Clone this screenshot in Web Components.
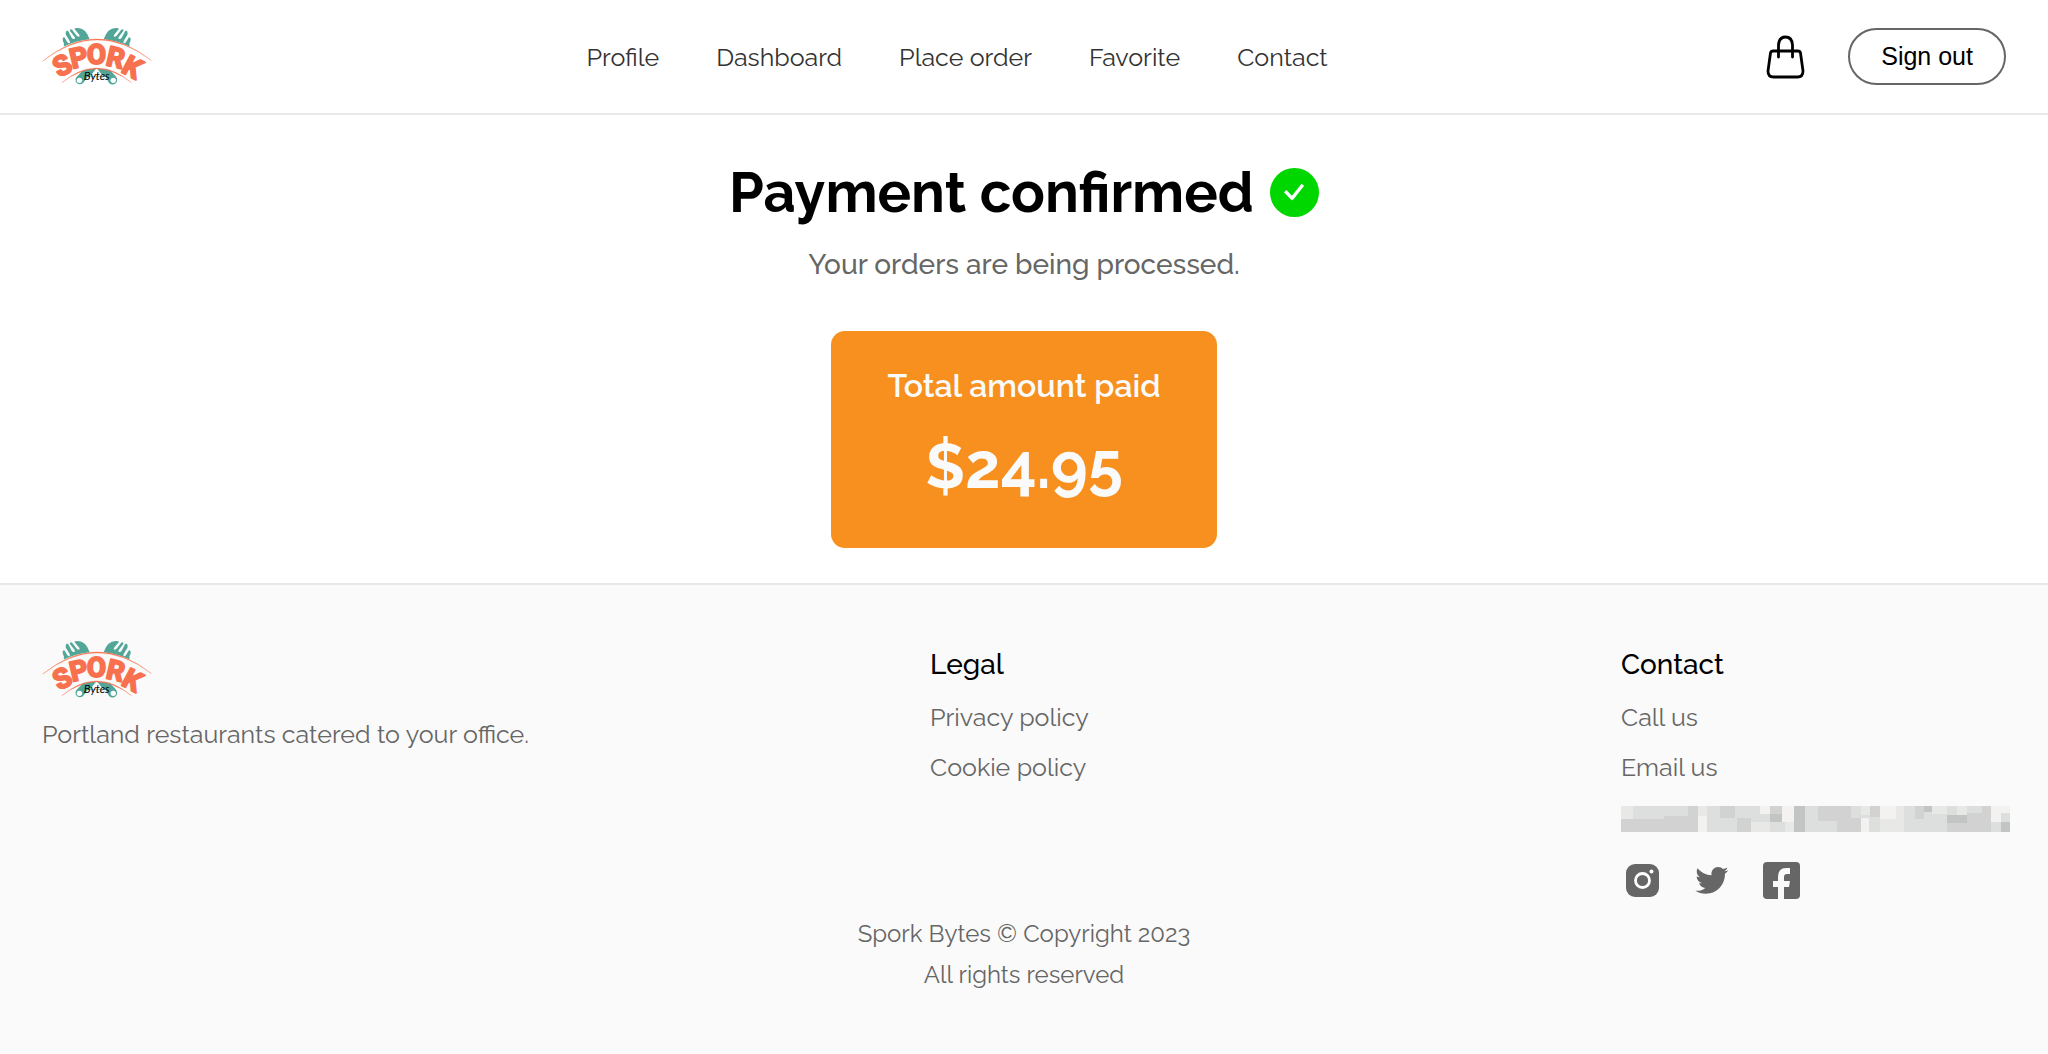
<!DOCTYPE html>
<html lang="en">
<head>
<meta charset="utf-8">
<meta name="viewport" content="width=device-width, initial-scale=1">
<title>Spork Bytes</title>
<style>
    body {
        margin: 0;
        min-height: 100vh;
        display: flex;
        flex-direction: column;
        background: #FFF;
        color: #000;
        font-family: Raleway, Lato, sans-serif;
        font-size: 25px;
        line-height: 32px;
    }
</style>
</head>
<body>
    <header-component></header-component>
    <payment-component amount="$24.95">
        Payment confirmed
        <span slot="message">Your orders are being processed.</span>
    </payment-component>
    <footer-component></footer-component>

<script>
class LogoComponent extends HTMLElement{
    constructor(){
        super();
        this.shadow = this.attachShadow({mode: "open"});
    }

    connectedCallback(){
        this.render();
    }

    render(){
        this.shadow.innerHTML = `
            <style>
                :host {
                    display: block;
                    width: 110px;
                }

                svg {
                    display: block;
                    width: 110px;
                    height: 57px;
                    overflow: visible;
                }
            </style>

            <svg viewBox="0 0 328 172" role="img" aria-label="Spork Bytes">
                <defs>
                    <path id="head" d="M64 56 V46 Q58 36 62 29 Q65 25 68 32 L75 44 Q84 50 82 40 L70 20 Q68 6 77 9 L88 30 Q99 38 97 28 L82 8 Q83 2 89 5 L102 23 Q113 31 111 21 L96 3 Q96 0 106 0 Q130 0 142 34 Q100 38 64 56 Z"/>
                </defs>
                <g fill="#52A698">
                    <use href="#head"/>
                    <use href="#head" transform="translate(326 0) scale(-1 1)"/>
                    <path d="M122 127 Q163 117 204 127 L222 148 A13 13 0 1 1 200 165 L190 148 H136 L122 166 A13 13 0 1 1 103 147 Z"/>
                </g>
                <path d="M150 137 L163 121 L176 137 L184 146 H142 Z" fill="#FFF"/>
                <circle cx="111" cy="158" r="8" fill="#FFF"/>
                <circle cx="213" cy="158" r="8" fill="#FFF"/>
                <path d="M0 100 Q163 -33 328 98 Q163 -27 0 100 Z M58 165 Q163 76 268 165 Q163 82 58 165 Z" fill="#F8714F" stroke="#F8714F" stroke-width="1"/>
                <text x="49 89 134 188 234" y="150 123 109 112 131" rotate="-27 -13 0 13 28" font-family="Roboto, sans-serif" font-weight="700" font-size="83" fill="#F8714F" stroke="#F8714F" stroke-width="6" stroke-linejoin="round">SPORK</text>
                <text x="163" y="158" text-anchor="middle" font-family="Lato, sans-serif" font-style="italic" font-weight="400" font-size="34">Bytes</text>
            </svg>
        `
    }
}

class HeaderComponent extends HTMLElement{
    constructor(){
        super();
        this.shadow = this.attachShadow({mode: "open"});
    }

    connectedCallback(){
        this.render();
    }

    render(){
        this.shadow.innerHTML = `
            <style>
                :host {
                    display: block;
                    border-bottom: 2px solid #E8E8E8;
                }

                #header-container {
                    display: flex;
                    justify-content: space-between;
                    align-items: center;
                    padding: 28px 42px;
                }

                nav {
                    display: flex;
                    gap: 57px;
                }

                nav a {
                    color: #333;
                    text-decoration: none;
                }

                #header-actions {
                    display: flex;
                    align-items: center;
                    gap: 38px;
                }

                #bag {
                    display: flex;
                    padding: 0;
                    border: 0;
                    background: none;
                }

                #bag svg {
                    width: 48px;
                    height: 48px;
                }

                #sign-out {
                    height: 57px;
                    padding: 0 31px;
                    border: 2px solid #666;
                    border-radius: 32px;
                    background: #FFF;
                    color: #000;
                    font-family: "Liberation Sans", Arial, sans-serif;
                    font-size: 25px;
                }
            </style>

            <header id="header-container">
                <logo-component></logo-component>
                <nav>
                    <a href="#">Profile</a>
                    <a href="#">Dashboard</a>
                    <a href="#">Place order</a>
                    <a href="#">Favorite</a>
                    <a href="#">Contact</a>
                </nav>
                <div id="header-actions">
                    <button id="bag" aria-label="Cart">
                        <svg viewBox="0 0 48 48" fill="none" stroke="#000" stroke-width="2.800" stroke-linecap="round" stroke-linejoin="round">
                            <path d="M11 18 H36 Q38 18 38.500 20 L41 38 Q41 44 35.500 44 H11.500 Q6 44 6 38 L8.500 20 Q9 18 11 18 Z"/>
                            <path d="M16.500 24 V12 Q17 4 23.500 4 Q30 4 30.500 12 V24"/>
                        </svg>
                    </button>
                    <button id="sign-out">Sign out</button>
                </div>
            </header>
        `
    }
}

class PaymentComponent extends HTMLElement{
    constructor(){
        super();
        this.shadow = this.attachShadow({mode: "open"});
    }

    connectedCallback(){
        this.render();
    }

    render(){
        this.shadow.innerHTML = `
            <style>
                :host {
                    display: block;
                }

                main {
                    display: flex;
                    flex-direction: column;
                    align-items: center;
                    padding: 40px 42px 35px;
                }

                #payment-title {
                    display: flex;
                    align-items: center;
                    gap: 16px;
                }

                h1 {
                    margin: 0;
                    font-size: 56px;
                    font-weight: 700;
                    line-height: 74px;
                }

                #payment-title svg {
                    width: 49px;
                    height: 49px;
                }

                #payment-message {
                    margin: 18px 0 48px;
                    color: #666;
                    font-size: 28px;
                    font-weight: 500;
                    line-height: 36px;
                }

                #payment-card {
                    display: flex;
                    flex-direction: column;
                    align-items: center;
                    padding: 35px 56px 40px;
                    border-radius: 14px;
                    background: #F7901E;
                    color: #FAFAFA;
                }

                h2 {
                    margin: 0 0 18px;
                    font-size: 32px;
                    font-weight: 600;
                    line-height: 40px;
                }

                #payment-amount {
                    margin: 0;
                    font-size: 63px;
                    font-weight: 700;
                    font-variant-numeric: oldstyle-nums;
                    line-height: 84px;
                }
            </style>

            <main>
                <div id="payment-title">
                    <h1><slot></slot></h1>
                    <svg viewBox="0 0 50 50" aria-hidden="true">
                        <circle cx="25" cy="25" r="25" fill="#00D600"/>
                        <path d="M15.500 23.500 L22.500 31 L33.500 17" fill="none" stroke="#FFF" stroke-width="3.400" stroke-linejoin="round"/>
                    </svg>
                </div>
                <p id="payment-message"><slot name="message"></slot></p>
                <section id="payment-card">
                    <h2>Total amount paid</h2>
                    <p id="payment-amount">${this.getAttribute("amount")}</p>
                </section>
            </main>
        `
    }
}

class FooterComponent extends HTMLElement{
    constructor(){
        super();
        this.shadow = this.attachShadow({mode: "open"});
    }

    connectedCallback(){
        this.render();
    }

    render(){
        this.shadow.innerHTML = `
            <style>
                :host {
                    display: block;
                    flex: 1;
                    border-top: 2px solid #E8E8E8;
                    background: #FAFAFA;
                    color: #666;
                }

                #footer-content {
                    display: flex;
                    justify-content: space-between;
                    padding: 56px 38px 0 42px;
                }

                #footer-brand p {
                    margin: 20px 0 0;
                }

                .footer-links {
                    display: flex;
                    flex-direction: column;
                    gap: 18px;
                    min-width: 290px;
                    padding-top: 6px;
                }

                h3 {
                    margin: 0;
                    color: #000;
                    font-size: 28px;
                    font-weight: 500;
                    line-height: 36px;
                }

                a {
                    color: #666;
                    text-decoration: none;
                }

                #footer-address {
                    display: block;
                    width: 389px;
                    height: 26px;
                    padding-top: 5px;
                }

                #footer-social {
                    display: flex;
                    gap: 21px;
                    padding-top: 6px;
                }

                #footer-social a, #footer-social svg {
                    display: block;
                    width: 48px;
                    height: 48px;
                }

                #footer-copyright {
                    padding: 9px 0;
                    text-align: center;
                    font-size: 24px;
                    font-variant-numeric: oldstyle-nums;
                    line-height: 41px;
                }

                #footer-copyright p {
                    margin: 0;
                }
            </style>

            <footer>
                <div id="footer-content">
                    <div id="footer-brand">
                        <logo-component></logo-component>
                        <p>Portland restaurants catered to your office.</p>
                    </div>
                    <div class="footer-links">
                        <h3>Legal</h3>
                        <a href="#">Privacy policy</a>
                        <a href="#">Cookie policy</a>
                    </div>
                    <div class="footer-links">
                        <h3>Contact</h3>
                        <a href="#">Call us</a>
                        <a href="#">Email us</a>
                        <svg id="footer-address" viewBox="0 0 1167 78" preserveAspectRatio="none" shape-rendering="crispEdges" aria-hidden="true">
                            <path fill="#DCDFDE" d="M0 0H1167V78H0Z"/>
                            <path fill="#E8E8E6" d="M0 0H36V39H0Z M231 0H258V30H231Z M390 48H447V78H390Z M492 48H519V78H492Z M720 0H747V27H720Z M777 39H849V78H777Z M825 0H849V39H825Z M933 0H978V24H933Z M1008 0H1038V27H1008Z"/>
                            <path fill="#D1D2D1" d="M0 39H129V78H0Z M201 0H231V30H201Z M129 30H231V78H129Z M297 0H342V36H297Z M348 36H390V78H348Z M447 0H483V24H447Z M591 0H690V45H591Z M648 36H720V78H648Z M747 0H777V33H747Z M882 0H909V39H882Z M978 51H1110V78H978Z M1038 22H1110V51H1038Z M1083 0H1110V24H1083Z"/>
                            <path fill="#C2C5C4" d="M447 24H483V48H447Z M519 0H552V78H519Z M909 0H933V18H909Z M978 27H1038V51H978Z M1140 48H1167V78H1140Z"/>
                            <path fill="#F3F2F0" d="M231 30H258V78H231Z M417 0H447V24H417Z M483 0H519V48H483Z M720 36H744V78H720Z M777 0H825V39H777Z M1110 0H1140V48H1110Z M1140 0H1167V21H1140Z"/>
                        </svg>
                        <div id="footer-social">
                            <a href="#" aria-label="Instagram">
                                <svg viewBox="0 0 48 48">
                                    <rect x="5" y="8" width="33" height="33" rx="9" fill="#666"/>
                                    <circle cx="21.500" cy="24.500" r="7" fill="none" stroke="#FFF" stroke-width="2.800"/>
                                    <circle cx="30.500" cy="15.500" r="2" fill="#FFF"/>
                                </svg>
                            </a>
                            <a href="#" aria-label="Twitter">
                                <svg viewBox="0 0 48 48">
                                    <path transform="translate(4 7) scale(1.450)" fill="#666" d="M23.643 4.937c-.835.370-1.732.620-2.675.733.962-.576 1.700-1.490 2.048-2.578-.900.534-1.897.922-2.958 1.130-.850-.904-2.060-1.470-3.400-1.470-2.572 0-4.658 2.086-4.658 4.660 0 .364.042.718.120 1.060-3.873-.195-7.304-2.050-9.602-4.868-.400.690-.630 1.490-.630 2.342 0 1.616.823 3.043 2.072 3.878-.764-.025-1.482-.234-2.110-.583v.060c0 2.257 1.605 4.140 3.737 4.568-.392.106-.803.162-1.227.162-.300 0-.593-.028-.877-.082.593 1.850 2.313 3.198 4.352 3.234-1.595 1.250-3.604 1.995-5.786 1.995-.376 0-.747-.022-1.112-.065 2.062 1.323 4.510 2.093 7.140 2.093 8.570 0 13.255-7.098 13.255-13.254 0-.200-.005-.402-.014-.602.910-.658 1.700-1.477 2.323-2.410z"/>
                                </svg>
                            </a>
                            <a href="#" aria-label="Facebook">
                                <svg viewBox="0 0 48 48">
                                    <rect x="4" y="6" width="37" height="37" rx="4" fill="#666"/>
                                    <path d="M19 43V31H14V25H19V21Q19 12 27 12H31V18H28Q25 18 25 21V25H31L30 31H25V43Z" fill="#FAFAFA"/>
                                </svg>
                            </a>
                        </div>
                    </div>
                </div>
                <div id="footer-copyright">
                    <p>Spork Bytes © Copyright 2023</p>
                    <p>All rights reserved</p>
                </div>
            </footer>
        `
    }
}

customElements.define('logo-component',LogoComponent);
customElements.define('header-component',HeaderComponent);
customElements.define('payment-component',PaymentComponent);
customElements.define('footer-component',FooterComponent);
</script>
</body>
</html>
